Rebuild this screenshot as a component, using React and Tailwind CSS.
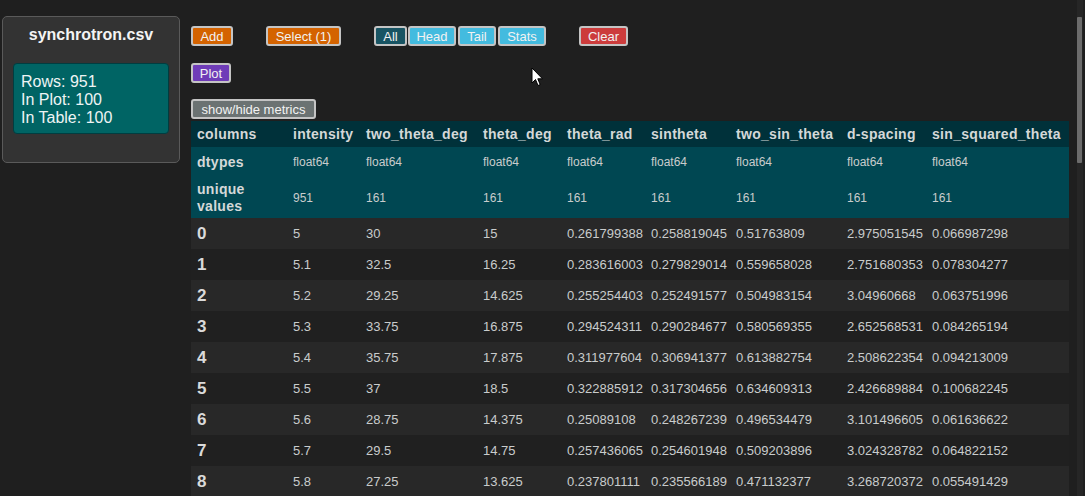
import React from 'react';

const font = { fontFamily: '"Liberation Sans", Arial, sans-serif' };

const btn =
  'h-[20px] rounded-[3px] border-2 border-[#c4c4c4] text-[13px] leading-none text-[#f2f2f2] flex items-center justify-center';

const head = 'px-[6px] text-[14px] tracking-[0.3px] font-bold text-[#d4d8d8]';

const columns = [
  { name: 'columns', w: 96 },
  { name: 'intensity', w: 73 },
  { name: 'two_theta_deg', w: 117 },
  { name: 'theta_deg', w: 84 },
  { name: 'theta_rad', w: 84 },
  { name: 'sintheta', w: 85 },
  { name: 'two_sin_theta', w: 111 },
  { name: 'd-spacing', w: 85 },
  { name: 'sin_squared_theta', w: 143 },
];

const rows = [
  ['5', '30', '15', '0.261799388', '0.258819045', '0.51763809', '2.975051545', '0.066987298'],
  ['5.1', '32.5', '16.25', '0.283616003', '0.279829014', '0.559658028', '2.751680353', '0.078304277'],
  ['5.2', '29.25', '14.625', '0.255254403', '0.252491577', '0.504983154', '3.04960668', '0.063751996'],
  ['5.3', '33.75', '16.875', '0.294524311', '0.290284677', '0.580569355', '2.652568531', '0.084265194'],
  ['5.4', '35.75', '17.875', '0.311977604', '0.306941377', '0.613882754', '2.508622354', '0.094213009'],
  ['5.5', '37', '18.5', '0.322885912', '0.317304656', '0.634609313', '2.426689884', '0.100682245'],
  ['5.6', '28.75', '14.375', '0.25089108', '0.248267239', '0.496534479', '3.101496605', '0.061636622'],
  ['5.7', '29.5', '14.75', '0.257436065', '0.254601948', '0.509203896', '3.024328782', '0.064822152'],
  ['5.8', '27.25', '13.625', '0.237801111', '0.235566189', '0.471132377', '3.268720372', '0.055491429'],
];

function Cursor() {
  return (
    <svg className="absolute left-[531px] top-[67px]" width="13" height="20" viewBox="0 0 13 20">
      <path d="M1 1 L1 16 L4.5 12.5 L7 18.5 L9.2 17.6 L6.8 11.8 L11.5 11.8 Z" fill="#fff" stroke="#000" strokeWidth="1" />
    </svg>
  );
}

export default function App() {
  return (
    <div className="relative h-[496px] w-full overflow-hidden bg-[#1f1f1f] flex" style={font}>
      {/* file card */}
      <div className="w-[191px] shrink-0 pl-[2px] pt-[16px]">
        <div className="w-[178px] h-[147px] bg-[#333333] border border-[#5a5a5a] rounded-[5px] pt-[9px] px-[10px]">
          <h1 className="text-center text-[16px] font-bold text-[#f4f4f4] leading-[18px]">synchrotron.csv</h1>
          <div className="mt-[19px] h-[71px] bg-[#006464] border border-[#003d40] rounded-[4px] px-[7px] pt-[9px] text-[16px] leading-[18px] text-[#eef4f4]">
            <div>Rows: 951</div>
            <div>In Plot: 100</div>
            <div>In Table: 100</div>
          </div>
        </div>
      </div>

      {/* main */}
      <div className="w-[878px] shrink-0 pt-[26px] flex flex-col">
        <div className="flex items-center">
          <button className={`${btn} w-[42px] bg-[#d46300]`}>Add</button>
          <button className={`${btn} w-[75px] bg-[#d46300] ml-[33px]`}>Select (1)</button>
          <div className="flex ml-[33px]">
            <button className={`${btn} w-[33px] bg-[#185463]`}>All</button>
            <button className={`${btn} w-[48px] bg-[#43bbdf] ml-[1px]`}>Head</button>
            <button className={`${btn} w-[38px] bg-[#43bbdf] ml-[2px]`}>Tail</button>
            <button className={`${btn} w-[48px] bg-[#43bbdf] ml-[2px]`}>Stats</button>
          </div>
          <button className={`${btn} w-[49px] bg-[#cc3c3c] ml-[33px]`}>Clear</button>
        </div>
        <div className="mt-[17px]">
          <button className={`${btn} w-[40px] bg-[#6f3cb8] h-[19px]`}>Plot</button>
        </div>
        <div className="mt-[16px]">
          <button className={`${btn} w-[125px] bg-[#6b7272] h-[19px]`}>show/hide metrics</button>
        </div>
        <table className="mt-[2px] w-[878px] table-fixed border-collapse text-left">
          <colgroup>
            {columns.map((c) => (
              <col key={c.name} style={{ width: c.w }} />
            ))}
          </colgroup>
          <thead>
            <tr className="h-[26px] bg-[#00313a]">
              {columns.map((c) => (
                <th key={c.name} className={`${head} whitespace-nowrap`}>
                  {c.name}
                </th>
              ))}
            </tr>
          </thead>
          <tbody className="text-[12px] text-[#c9cccc]">
            <tr className="h-[30px] bg-[#004752]">
              <td className={head}>dtypes</td>
              {columns.slice(1).map((c) => (
                <td key={c.name} className="px-[6px]">float64</td>
              ))}
            </tr>
            <tr className="h-[41px] bg-[#004752]">
              <td className={`${head} leading-[17px]`}>
                unique
                <br />
                values
              </td>
              {columns.slice(1).map((c, i) => (
                <td key={c.name} className="px-[6px]">{i === 0 ? '951' : '161'}</td>
              ))}
            </tr>
            {rows.map((r, i) => (
              <tr key={i} className={`h-[31px] ${i % 2 === 0 ? 'bg-[#282828]' : 'bg-[#202020]'}`}>
                <td className="px-[6px] text-[17px] font-bold text-[#dadada]">{i}</td>
                {r.map((v, j) => (
                  <td key={j} className="px-[6px] text-[13px] whitespace-nowrap">{v}</td>
                ))}
              </tr>
            ))}
          </tbody>
        </table>
      </div>

      {/* scrollbar */}
      <div className="w-[16px] shrink-0 flex justify-end pr-[2px]">
        <div className="w-[6px] h-full bg-[#262626] pt-[17px]">
          <div className="w-[5px] h-[146px] bg-[#6c6c6c] rounded-[1px]" />
        </div>
      </div>

      <Cursor />
    </div>
  );
}
